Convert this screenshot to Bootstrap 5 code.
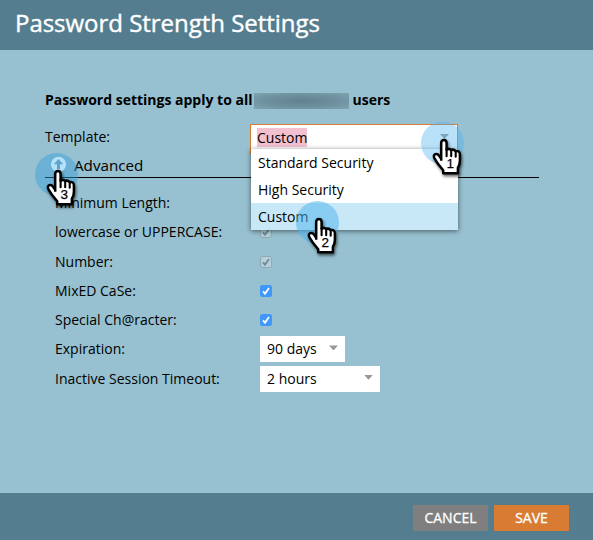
<!DOCTYPE html>
<html lang="en">
<head>
<meta charset="utf-8">
<meta name="viewport" content="width=device-width, initial-scale=1">
<title>Password Strength Settings</title>
<link href="https://cdn.jsdelivr.net/npm/bootstrap@5.3.0/dist/css/bootstrap.min.css" rel="stylesheet">
<style>
body{font-family:"Open Sans",sans-serif;font-size:14px;line-height:20px;color:#000;background:#97c0d0}
.dialog{width:593px;height:540px;overflow:hidden}
.bar{background:#547d8f}
.dialog-head{height:50px;padding:0 15px 4px}
.dialog-head h1{font-size:24px;line-height:30px;color:#fff;letter-spacing:-.03px;-webkit-text-stroke:.4px #fff}
.dialog-main{padding:40px 54px 0 45px}
.intro{font-weight:700;font-size:14px}
.redacted{width:95px;height:16px;margin:2px 3px 0 2px;background:radial-gradient(ellipse at center,#60808d 0,#6f919f 55%,#7fa4b2 100%)}
.template-row{height:30px;margin-top:14px}
.template-label{width:205px;padding-top:3px}
.combo{width:208px;height:30px;border:1px solid #d87b33;background:#fff;padding:3px 8px 0 6px}
.combo mark{background:#f2c0cf;padding:0;color:#000}
.combo .caret{margin-top:6px}
.caret{width:9px;height:5px;background:#999;clip-path:polygon(0 0,100% 0,50% 100%)}
.advanced{height:24px;border-bottom:1px solid #000;font-size:15.2px;padding:0 0 1px 6px}
.settings{padding:10.5px 0 0 10px}
.setting{height:29.25px}
.setting-label{width:205px}
.check{width:12px;height:12px;border-radius:2.5px;background:#3f97fb}
.check.off{background:#b5d0da;border:1px solid #8fa9b3}
.pick{height:26px;background:#fff;padding:0 7px}
.pick .caret{margin-top:-3px}
.menu{left:251px;top:149px;width:207px;height:81px;background:#fff;box-shadow:0 1px 5px rgba(0,0,0,.55)}
.menu div{height:27px;padding:4px 7px}
.menu .chosen{background:#c9e8f7}
.pointer{width:50px;height:62px;overflow:visible}
.pointer text{font:13.5px "Liberation Sans",Arial,sans-serif;stroke:#000;stroke-width:.25px}
.shade{filter:drop-shadow(1px 2px 1.5px rgba(0,0,0,.6))}
.p1{left:421px;top:122px}.p2{left:296px;top:201px}.p3{left:35px;top:153px}
.dialog-foot{height:47px;padding:3px 24px 0 0}
.act{width:75px;height:26px;padding:0;border:0;border-radius:0;color:#fff;font-size:14px;line-height:26px;-webkit-text-stroke:.3px #fff}
.cancel{background:#7f7f7f}.save{background:#d87b33}
.act:hover{color:#fff}
</style>
</head>
<body>
<div class="dialog d-flex flex-column position-relative">
  <header class="bar dialog-head d-flex align-items-center"><h1 class="m-0 fw-normal">Password Strength Settings</h1></header>
  <main class="dialog-main flex-grow-1">
    <div class="intro d-flex align-items-center"><span>Password settings apply to all</span><span class="redacted"></span><span>users</span></div>
    <div class="template-row d-flex"><span class="template-label">Template:</span>
      <div class="combo d-flex justify-content-between"><span><mark>Custom</mark></span><i class="caret"></i></div></div>
    <div class="advanced d-flex align-items-center gap-2">
      <svg width="15" height="15"></svg>
      <span>Advanced</span></div>
    <div class="settings">
      <div class="setting d-flex align-items-center"><span class="setting-label">Minimum Length:</span></div>
      <div class="setting d-flex align-items-center"><span class="setting-label">lowercase or UPPERCASE:</span><span class="check off d-flex"><svg viewBox="1 1 10 10"><path d="M3 6.3 5 8.7 9 3" fill="none" stroke="#6f8b96" stroke-width="1.8"/></svg></span></div>
      <div class="setting d-flex align-items-center"><span class="setting-label">Number:</span><span class="check off d-flex"><svg viewBox="1 1 10 10"><path d="M3 6.3 5 8.7 9 3" fill="none" stroke="#6f8b96" stroke-width="1.8"/></svg></span></div>
      <div class="setting d-flex align-items-center"><span class="setting-label">MixED CaSe:</span><span class="check d-flex"><svg viewBox="0 0 12 12"><path d="M3 6.3 5 8.7 9 3" fill="none" stroke="#fff" stroke-width="1.8"/></svg></span></div>
      <div class="setting d-flex align-items-center"><span class="setting-label">Special Ch@racter:</span><span class="check d-flex"><svg viewBox="0 0 12 12"><path d="M3 6.3 5 8.7 9 3" fill="none" stroke="#fff" stroke-width="1.8"/></svg></span></div>
      <div class="setting d-flex align-items-center"><span class="setting-label">Expiration:</span><span class="pick d-flex align-items-center justify-content-between" style="width:85px">90 days<i class="caret"></i></span></div>
      <div class="setting d-flex align-items-center"><span class="setting-label">Inactive Session Timeout:</span><span class="pick d-flex align-items-center justify-content-between" style="width:120px">2 hours<i class="caret"></i></span></div>
    </div>
  </main>
  <footer class="bar dialog-foot d-flex align-items-center justify-content-end">
    <div class="d-flex" style="gap:6px"><button class="btn act cancel">CANCEL</button><button class="btn act save">SAVE</button></div>
  </footer>

  <div class="menu position-absolute"><div>Standard Security</div><div>High Security</div><div class="chosen">Custom</div></div>

  <svg class="pointer p1 position-absolute" viewBox="0 0 50 62">
    <defs><g id="hand"><path d="M10.5 22V4.2Q10.5 1.2 13.2 1.2T15.9 4.2V11Q18 9 20.5 11.2Q23 10 25 12.4Q29.2 11.5 29.2 16V22Q29.2 26 27.2 29V34.5H12.5V31.5L7.6 25.5 3.8 19.5Q2.2 16.5 4.6 15.4Q6.8 14.8 8.4 17L10.5 20" fill="#fff" stroke="#000" stroke-width="2.5" stroke-linejoin="round"/><path d="M15.9 10V17.5M20.5 11V17.5M25 12.5V18" fill="none" stroke="#000" stroke-width="2.1" stroke-linecap="round"/></g></defs>
    <circle cx="21.5" cy="21" r="21.5" fill="#4fb4f0" fill-opacity=".4"/><g class="shade"><use href="#hand" x="9.7" y="16.8"/></g><text x="25.6" y="45.5">1</text></svg>
  <svg class="pointer p2 position-absolute" viewBox="0 0 50 62"><circle cx="21.5" cy="21.5" r="21.5" fill="#4fb4f0" fill-opacity=".52"/><g class="shade"><use href="#hand" x="9.7" y="16.8"/></g><text x="25.6" y="46">2</text></svg>
  <svg class="pointer p3 position-absolute" viewBox="0 0 50 62"><circle cx="21.5" cy="21.5" r="21.5" fill="#369fdb" fill-opacity=".45"/><circle cx="23.5" cy="11.3" r="7.6" fill="#b5e1fa"/><path d="M23.5 6 28.3 11.3H25V16H22V11.3H18.7Z" fill="#5fa5cb"/><g class="shade"><use href="#hand" x="9.7" y="16.8"/></g><text x="25.6" y="46">3</text></svg>
</div>
<script src="https://cdn.jsdelivr.net/npm/bootstrap@5.3.0/dist/js/bootstrap.bundle.min.js"></script>
</body>
</html>
